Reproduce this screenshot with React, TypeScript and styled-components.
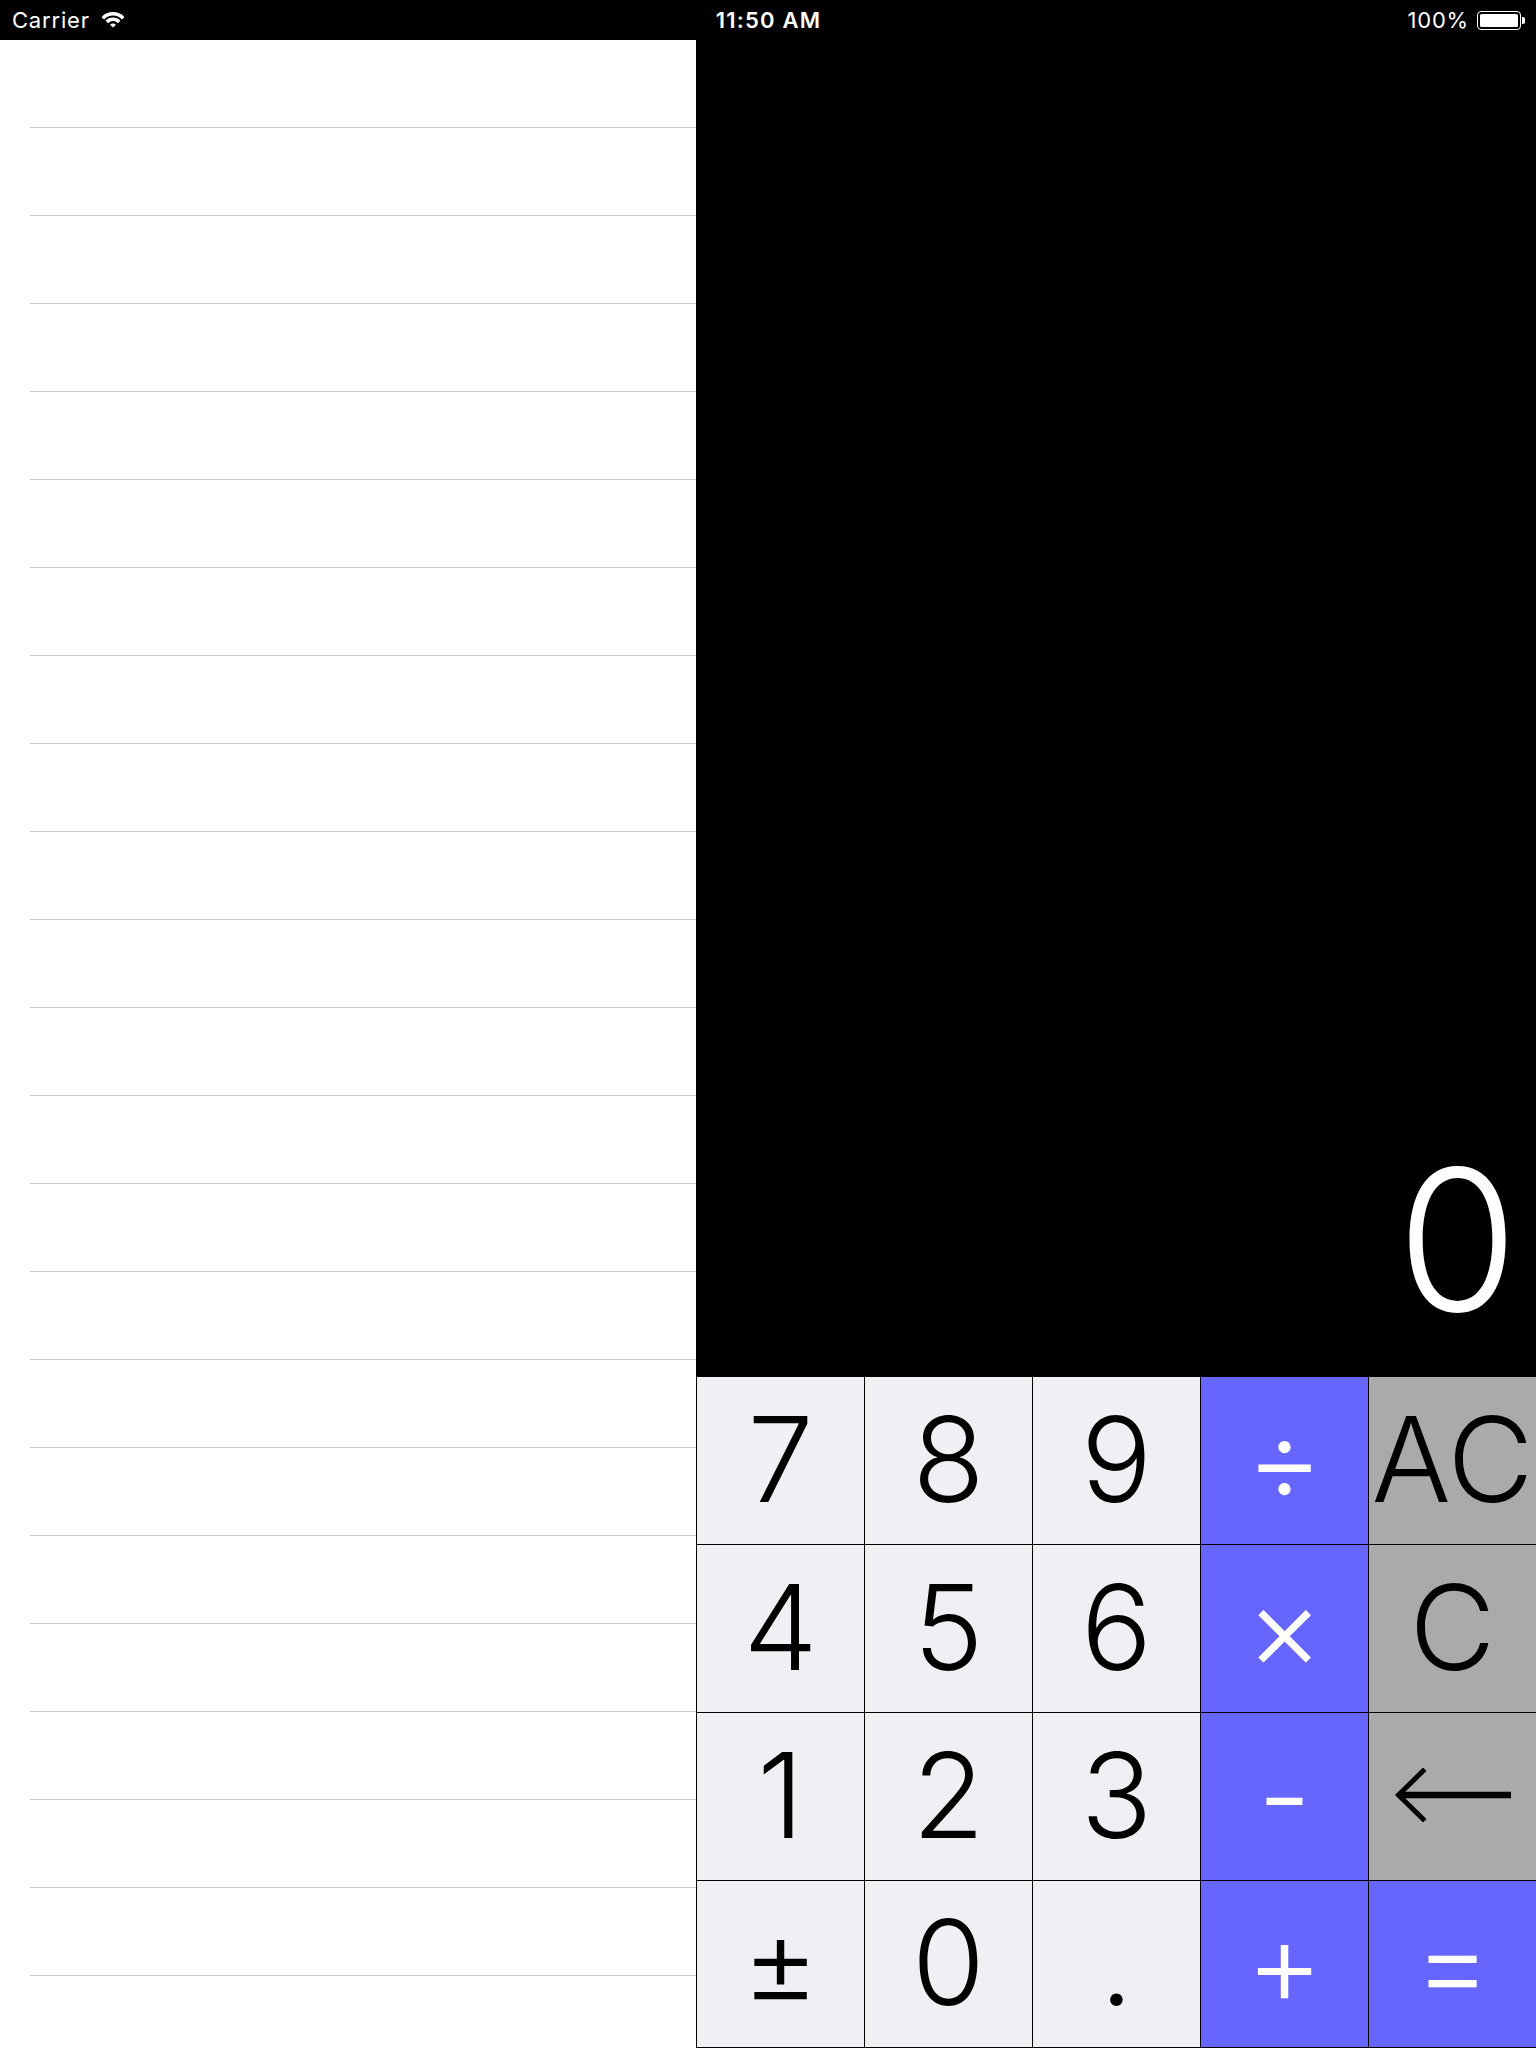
import React from 'react';
import styled, { createGlobalStyle } from 'styled-components';

const GlobalStyle = createGlobalStyle`
  html, body {
    margin: 0;
    padding: 0;
    background: #ffffff;
    overflow: hidden;
  }
  * {
    box-sizing: border-box;
  }
`;

const Screen = styled.div`
  width: 1536px;
  height: 2048px;
  display: flex;
  flex-direction: column;
  font-family: Inter, 'Liberation Sans', sans-serif;
`;

const StatusBar = styled.div`
  height: 40px;
  flex: none;
  background: #000;
  color: #fff;
  display: grid;
  grid-template-columns: 1fr auto 1fr;
  align-items: center;
  padding: 0 11px 0 12px;
  font-size: 22px;
  letter-spacing: 0.8px;
`;

const StatusLeft = styled.div`
  display: flex;
  align-items: center;
  gap: 11px;
`;

const StatusTime = styled.div`
  font-weight: 600;
  letter-spacing: 1.2px;
`;

const StatusRight = styled.div`
  display: flex;
  align-items: center;
  justify-content: flex-end;
  gap: 8px;
`;

const Battery = styled.div`
  display: flex;
  align-items: center;
`;

const BatteryBody = styled.div`
  width: 44px;
  height: 19px;
  border: 1.5px solid #fff;
  border-radius: 4px;
  padding: 2px;
`;

const BatteryLevel = styled.div`
  width: 100%;
  height: 100%;
  background: #fff;
  border-radius: 1.5px;
`;

const BatteryNub = styled.div`
  width: 3px;
  height: 7px;
  background: #fff;
  border-radius: 0 2px 2px 0;
  margin-left: 1px;
`;

const Main = styled.div`
  flex: 1;
  display: flex;
  min-height: 0;
`;

const HistoryList = styled.div`
  width: 696px;
  flex: none;
  background: #fff;
  display: flex;
  flex-direction: column;
`;

const HistoryRow = styled.div`
  height: 88px;
  flex: none;
  margin-left: 30px;
  border-bottom: 1px solid #c8c7cc;
`;

const Calculator = styled.div`
  flex: 1;
  display: flex;
  flex-direction: column;
  background: #000;
`;

const Display = styled.div`
  flex: 1;
  display: flex;
  align-items: flex-end;
  justify-content: flex-end;
  padding: 0 18px 38px 0;
  color: #fff;
  font-size: 196px;
  font-weight: 300;
  line-height: 1;
`;

const Keypad = styled.div`
  display: grid;
  grid-template-columns: repeat(5, 168px);
  grid-template-rows: 168px 168px 168px 167px;
  border-bottom: 1px solid #000;
`;

type Variant = 'digit' | 'op' | 'clear';

const keyColors: Record<Variant, { bg: string; fg: string }> = {
  digit: { bg: '#efeff4', fg: '#000' },
  op: { bg: '#6666ff', fg: '#fff' },
  clear: { bg: '#aaaaaa', fg: '#000' },
};

const Key = styled.button<{ $variant: Variant }>`
  appearance: none;
  margin: 0;
  padding: 0 0 4px;
  border: 0;
  border-left: 1px solid #000;
  border-top: 1px solid #000;
  border-radius: 0;
  background: ${({ $variant }) => keyColors[$variant].bg};
  color: ${({ $variant }) => keyColors[$variant].fg};
  font-family: Inter, 'Liberation Sans', sans-serif;
  font-size: 118px;
  font-weight: 300;
  line-height: 1;
  display: flex;
  align-items: center;
  justify-content: center;
  white-space: nowrap;
  overflow: hidden;
`;

const WifiIcon = () => {
  const cx = 12;
  const cy = 15.5;
  const s = Math.sin((48 * Math.PI) / 180);
  const c = Math.cos((48 * Math.PI) / 180);
  const ring = (r1: number, r2: number) =>
    `M${cx - r2 * s} ${cy - r2 * c} A${r2} ${r2} 0 0 1 ${cx + r2 * s} ${cy - r2 * c} ` +
    `L${cx + r1 * s} ${cy - r1 * c} A${r1} ${r1} 0 0 0 ${cx - r1 * s} ${cy - r1 * c} Z`;
  return (
    <svg width="24" height="16" viewBox="0 0 24 16" fill="#fff">
      <path d={ring(12, 15.5)} />
      <path d={ring(6.5, 10)} />
      <path d={`M${cx} ${cy} L${cx - 4 * s} ${cy - 4 * c} A4 4 0 0 1 ${cx + 4 * s} ${cy - 4 * c} Z`} />
    </svg>
  );
};

const BackArrow = () => (
  <svg width="118" height="54" viewBox="0 0 118 54" fill="none" stroke="#000" aria-label="←">
    <path d="M4 27 H117" strokeWidth="6.5" />
    <path d="M29 3 L4.5 27 L29 51" strokeWidth="5" strokeLinecap="square" />
  </svg>
);

const keys: { label: React.ReactNode; id: string; variant: Variant }[] = [
  { id: '7', label: '7', variant: 'digit' },
  { id: '8', label: '8', variant: 'digit' },
  { id: '9', label: '9', variant: 'digit' },
  { id: 'div', label: '÷', variant: 'op' },
  { id: 'ac', label: 'AC', variant: 'clear' },
  { id: '4', label: '4', variant: 'digit' },
  { id: '5', label: '5', variant: 'digit' },
  { id: '6', label: '6', variant: 'digit' },
  { id: 'mul', label: '×', variant: 'op' },
  { id: 'c', label: 'C', variant: 'clear' },
  { id: '1', label: '1', variant: 'digit' },
  { id: '2', label: '2', variant: 'digit' },
  { id: '3', label: '3', variant: 'digit' },
  { id: 'sub', label: '-', variant: 'op' },
  { id: 'back', label: <BackArrow />, variant: 'clear' },
  { id: 'neg', label: '±', variant: 'digit' },
  { id: '0', label: '0', variant: 'digit' },
  { id: 'dot', label: '.', variant: 'digit' },
  { id: 'add', label: '+', variant: 'op' },
  { id: 'eq', label: '=', variant: 'op' },
];

export default function App() {
  return (
    <>
      <GlobalStyle />
      <Screen>
        <StatusBar>
          <StatusLeft>
            <span>Carrier</span>
            <WifiIcon />
          </StatusLeft>
          <StatusTime>11:50 AM</StatusTime>
          <StatusRight>
            <span>100%</span>
            <Battery>
              <BatteryBody>
                <BatteryLevel />
              </BatteryBody>
              <BatteryNub />
            </Battery>
          </StatusRight>
        </StatusBar>
        <Main>
          <HistoryList>
            {Array.from({ length: 22 }, (_, i) => (
              <HistoryRow key={i} />
            ))}
          </HistoryList>
          <Calculator>
            <Display>0</Display>
            <Keypad>
              {keys.map((k) => (
                <Key key={k.id} $variant={k.variant}>
                  {k.label}
                </Key>
              ))}
            </Keypad>
          </Calculator>
        </Main>
      </Screen>
    </>
  );
}
